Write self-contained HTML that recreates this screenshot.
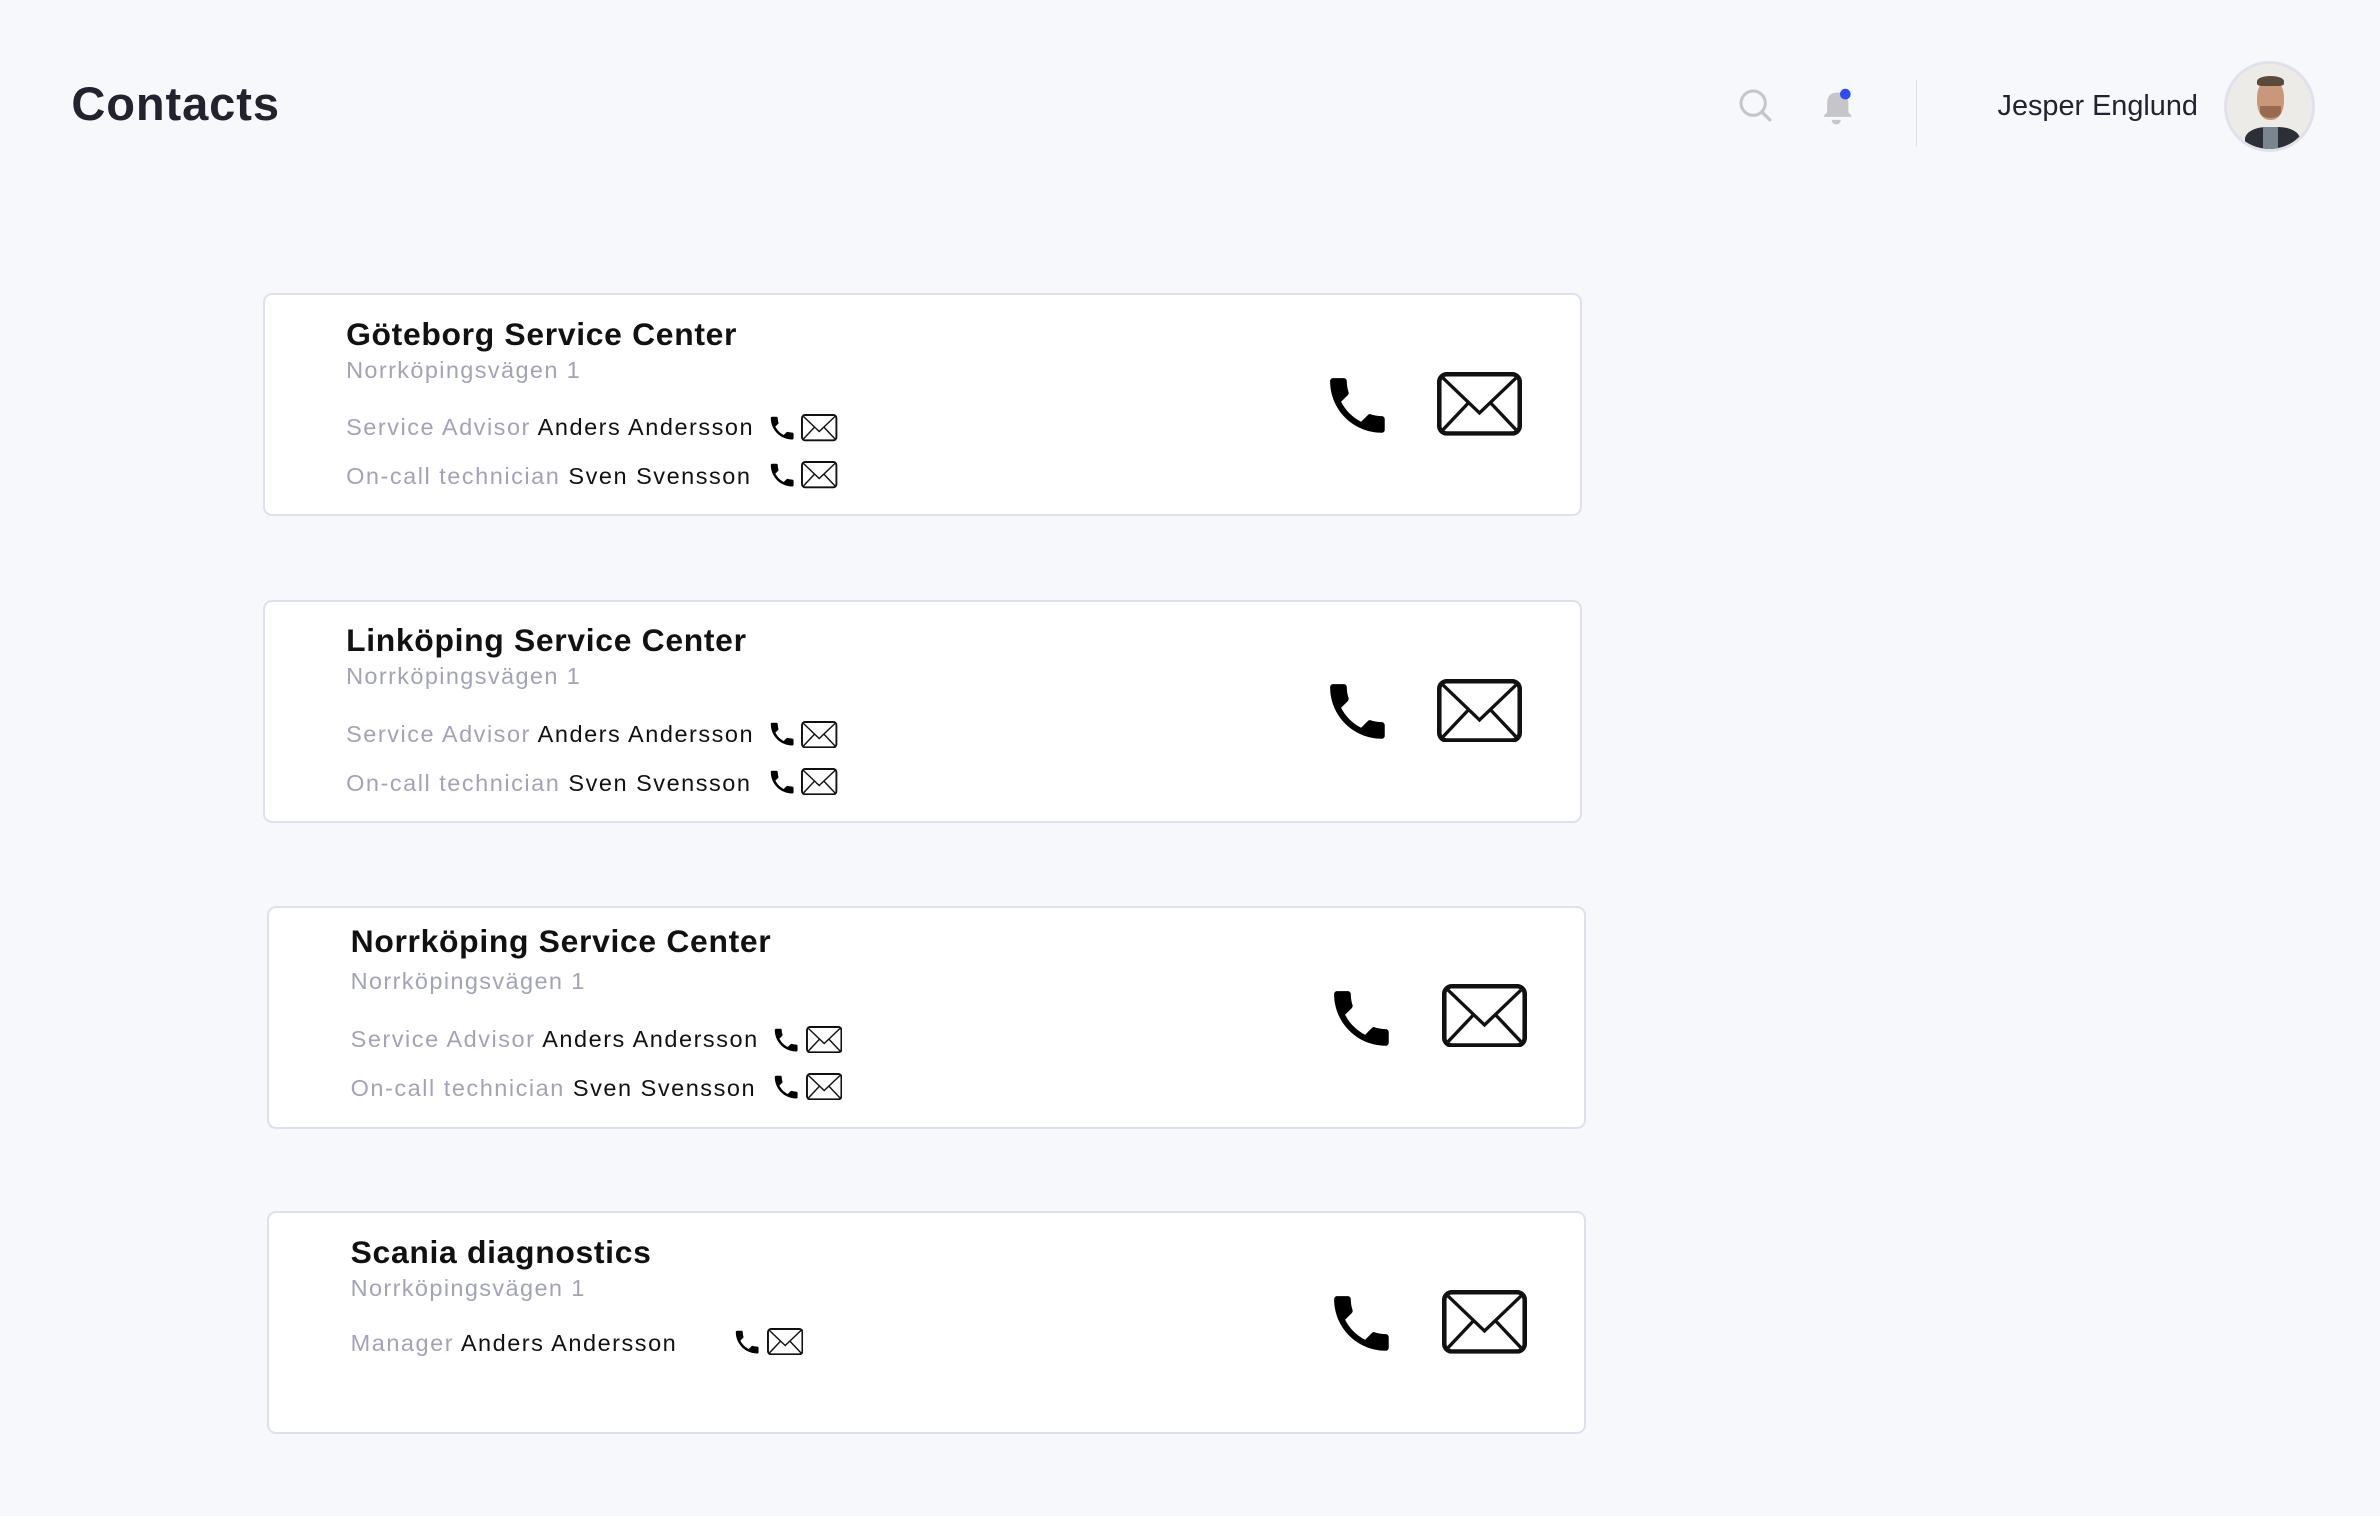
<!DOCTYPE html>
<html><head><meta charset="utf-8"><style>
html,body{margin:0;padding:0;background:#f7f8fb;}
body{width:2380px;height:1516px;overflow:hidden;font-family:"Liberation Sans",sans-serif;}
#w{zoom:1.5179;position:relative;width:1568px;height:999px;}
.a{position:absolute;white-space:nowrap;}
.card{position:absolute;width:869px;height:147px;background:#fff;border:1.5px solid #dfe0ec;border-radius:6px;box-sizing:border-box;}
.t{font-size:21px;color:#111;letter-spacing:0.45px;font-weight:600;}
.ad{font-size:15.5px;color:#a3a3b8;letter-spacing:0.9px;}
.r{font-size:15.5px;color:#111;letter-spacing:1px;}
.r span{color:#a3a3b8;}
</style></head><body><div id="w">
<div class="a" style="left:47px;top:50px;font-size:31px;color:#23232f;font-weight:bold;letter-spacing:0.6px">Contacts</div>
<svg class="a" style="left:1145px;top:58px" width="24" height="24" viewBox="0 0 24 24"><circle cx="10" cy="10" r="8" fill="none" stroke="#c6c6ca" stroke-width="2"/><line x1="16" y1="16" x2="21" y2="21" stroke="#c6c6ca" stroke-width="2.2" stroke-linecap="round"/></svg>
<svg class="a" style="left:1198px;top:56px" width="28" height="28" viewBox="0 0 28 28"><path d="M12 5c-4 0-6 3-6 7v6l-2 2v1h18v-1l-2-2v-6c0-4-2-7-6-7z" fill="#c6c6ca"/><path d="M9 23h6a3 3 0 0 1-6 0z" fill="#c6c6ca"/><circle cx="18" cy="6" r="3.5" fill="#2f4bf5"/></svg>
<div class="a" style="left:1262px;top:53px;width:1px;height:43px;background:#dcdde5"></div>
<div class="a" style="left:1316px;top:59px;font-size:19px;color:#23232f;">Jesper Englund</div>
<div class="a" style="left:1465px;top:40px;width:60px;height:60px;border-radius:50%;background:#ecebe7;border:2px solid #e1e1ec;box-sizing:border-box;overflow:hidden">
<div style="position:absolute;left:20px;top:10px;width:18px;height:27px;border-radius:45%;background:#c9987a"></div>
<div style="position:absolute;left:20px;top:8px;width:18px;height:7px;border-radius:50% 50% 20% 20%;background:#5a4a3c"></div>
<div style="position:absolute;left:22px;top:28px;width:14px;height:8px;border-radius:0 0 50% 50%;background:#9a6a50"></div>
<div style="position:absolute;left:12px;top:42px;width:36px;height:20px;border-radius:40% 40% 0 0;background:#2c2f36"></div>
<div style="position:absolute;left:24px;top:42px;width:10px;height:16px;background:#7b8590"></div>
</div>

<svg width="0" height="0" style="position:absolute"><defs>
<symbol id="ph" viewBox="0 0 24 24"><path d="M6.62 10.79c1.44 2.83 3.76 5.14 6.59 6.59l2.2-2.2c.27-.27.67-.36 1.02-.24 1.12.37 2.33.57 3.57.57.55 0 1 .45 1 1V20c0 .55-.45 1-1 1-9.39 0-17-7.61-17-17 0-.55.45-1 1-1h3.5c.55 0 1 .45 1 1 0 1.25.2 2.45.57 3.57.11.35.03.74-.25 1.020l-2.2 2.2z" fill="#000"/></symbol>
<symbol id="en" viewBox="0 0 56 42"><rect x="1.5" y="1.5" width="53" height="39" rx="5" fill="none" stroke="#111" stroke-width="3"/><polyline points="4,4 28,27 52,4" fill="none" stroke="#111" stroke-width="2.2"/><line x1="4" y1="38" x2="21" y2="20" stroke="#111" stroke-width="2.2"/><line x1="52" y1="38" x2="35" y2="20" stroke="#111" stroke-width="2.2"/></symbol>
</defs></svg>

<div class="card" style="left:173px;top:193px"></div>
<div class="a t" style="left:228px;top:208px">Göteborg Service Center</div>
<div class="a ad" style="left:228px;top:235px">Norrköpingsvägen 1</div>
<div class="a r" style="left:228px;top:273px"><span>Service Advisor</span> Anders Andersson</div>
<div class="a r" style="left:228px;top:305px"><span>On-call technician</span> Sven Svensson</div>
<svg class="a" style="left:505px;top:272px" width="20" height="20"><use href="#ph"/></svg><svg class="a" style="left:528px;top:273px" width="24" height="18"><use href="#en"/></svg>
<svg class="a" style="left:505px;top:303px" width="20" height="20"><use href="#ph"/></svg><svg class="a" style="left:528px;top:304px" width="24" height="18"><use href="#en"/></svg>
<svg class="a" style="left:870px;top:243px" width="48" height="48"><use href="#ph"/></svg><svg class="a" style="left:947px;top:245px" width="56" height="42"><use href="#en"/></svg>

<div class="card" style="left:173px;top:395px"></div>
<div class="a t" style="left:228px;top:410px">Linköping Service Center</div>
<div class="a ad" style="left:228px;top:437px">Norrköpingsvägen 1</div>
<div class="a r" style="left:228px;top:475px"><span>Service Advisor</span> Anders Andersson</div>
<div class="a r" style="left:228px;top:507px"><span>On-call technician</span> Sven Svensson</div>
<svg class="a" style="left:505px;top:474px" width="20" height="20"><use href="#ph"/></svg><svg class="a" style="left:528px;top:475px" width="24" height="18"><use href="#en"/></svg>
<svg class="a" style="left:505px;top:505px" width="20" height="20"><use href="#ph"/></svg><svg class="a" style="left:528px;top:506px" width="24" height="18"><use href="#en"/></svg>
<svg class="a" style="left:870px;top:445px" width="48" height="48"><use href="#ph"/></svg><svg class="a" style="left:947px;top:447px" width="56" height="42"><use href="#en"/></svg>

<div class="card" style="left:176px;top:597px"></div>
<div class="a t" style="left:231px;top:608px">Norrköping Service Center</div>
<div class="a ad" style="left:231px;top:638px">Norrköpingsvägen 1</div>
<div class="a r" style="left:231px;top:676px"><span>Service Advisor</span> Anders Andersson</div>
<div class="a r" style="left:231px;top:708px"><span>On-call technician</span> Sven Svensson</div>
<svg class="a" style="left:508px;top:675px" width="20" height="20"><use href="#ph"/></svg><svg class="a" style="left:531px;top:676px" width="24" height="18"><use href="#en"/></svg>
<svg class="a" style="left:508px;top:706px" width="20" height="20"><use href="#ph"/></svg><svg class="a" style="left:531px;top:707px" width="24" height="18"><use href="#en"/></svg>
<svg class="a" style="left:873px;top:647px" width="48" height="48"><use href="#ph"/></svg><svg class="a" style="left:950px;top:648px" width="56" height="42"><use href="#en"/></svg>

<div class="card" style="left:176px;top:798px"></div>
<div class="a t" style="left:231px;top:813px">Scania diagnostics</div>
<div class="a ad" style="left:231px;top:840px">Norrköpingsvägen 1</div>
<div class="a r" style="left:231px;top:876px"><span>Manager</span> Anders Andersson</div>
<svg class="a" style="left:482px;top:874px" width="20" height="20"><use href="#ph"/></svg><svg class="a" style="left:505px;top:875px" width="24" height="18"><use href="#en"/></svg>
<svg class="a" style="left:873px;top:848px" width="48" height="48"><use href="#ph"/></svg><svg class="a" style="left:950px;top:850px" width="56" height="42"><use href="#en"/></svg>
</div></body></html>
